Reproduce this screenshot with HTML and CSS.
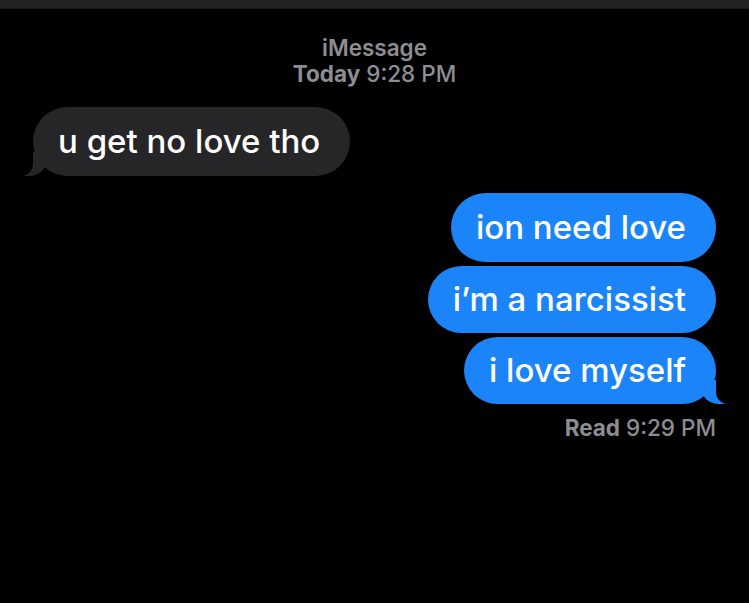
FILE: index.html
```html
<!DOCTYPE html>
<html lang="en">
<head>
  <meta charset="UTF-8" />
  <meta name="viewport" content="width=device-width, initial-scale=1.0"/>
  <title>iMessage</title>
  <link rel="stylesheet" href="styles.css">
</head>
<body>
  <!-- top bar -->
  <div class="top-bar"></div>

  <div class="chat">
    <div class="stamp">
      <div class="service">iMessage</div>
      <div class="time"><b>Today</b> 9:28 PM</div>
    </div>

    <div class="group received">
      <div class="bubble tail">u get no love tho</div>
    </div>

    <div class="group sent">
      <div class="bubble">ion need love</div>
      <div class="bubble">i’m a narcissist</div>
      <div class="bubble tail">i love myself</div>
    </div>

    <div class="receipt"><b>Read</b> 9:29 PM</div>
  </div>
</body>
</html>
```

FILE: styles.css
```css
:root {
  --blue: #1b84f8;
  --gray: #262628;
  --muted: #8d8d92;
  --bg: #000;
}

* {
  box-sizing: border-box;
}

body {
  margin: 0;
  background: var(--bg);
  color: #fff;
  font-family: Inter, 'Noto Sans', sans-serif;
  height: 100vh;
  overflow: hidden;
}

.top-bar {
  height: 9px;
  background: #222;
  border-bottom: 1px solid #161616;
}

.chat {
  display: flex;
  flex-direction: column;
  padding: 0 33px;
}

.stamp {
  text-align: center;
  color: var(--muted);
  font-size: 22.5px;
  line-height: 26px;
  margin-top: 26px;
  font-weight: 600;
}

.stamp .time,
.receipt {
  font-weight: 500;
}

.stamp b,
.receipt b {
  font-weight: 700;
}

.group {
  display: flex;
  flex-direction: column;
  gap: 4px;
}

.received {
  align-items: flex-start;
  margin-top: 20px;
}

.sent {
  align-items: flex-end;
  margin-top: 17px;
}

.bubble {
  position: relative;
  font-size: 33px;
  font-weight: 500;
  line-height: 38px;
  padding: 15px 30px 16px 25px;
  border-radius: 35px;
}

.received .bubble {
  background: var(--gray);
}

.sent .bubble {
  background: var(--blue);
}

.sent .bubble + .bubble {
  padding-top: 14px;
  padding-bottom: 15px;
}

/* tails */
.bubble.tail::before,
.bubble.tail::after {
  content: "";
  position: absolute;
  bottom: 0;
  height: 24px;
}

.sent .tail::before {
  right: -9px;
  width: 24px;
  background: var(--blue);
  border-bottom-left-radius: 18px 16px;
}

.sent .tail::after {
  right: -14px;
  width: 14px;
  background: var(--bg);
  border-bottom-left-radius: 12px;
}

.received .tail::before {
  left: -10px;
  width: 24px;
  background: var(--gray);
  border-bottom-right-radius: 18px 16px;
}

.received .tail::after {
  left: -15px;
  width: 15px;
  background: var(--bg);
  border-bottom-right-radius: 12px;
}

.receipt {
  align-self: flex-end;
  color: var(--muted);
  font-size: 22.5px;
  line-height: 26px;
  margin-top: 11px;
}
```
